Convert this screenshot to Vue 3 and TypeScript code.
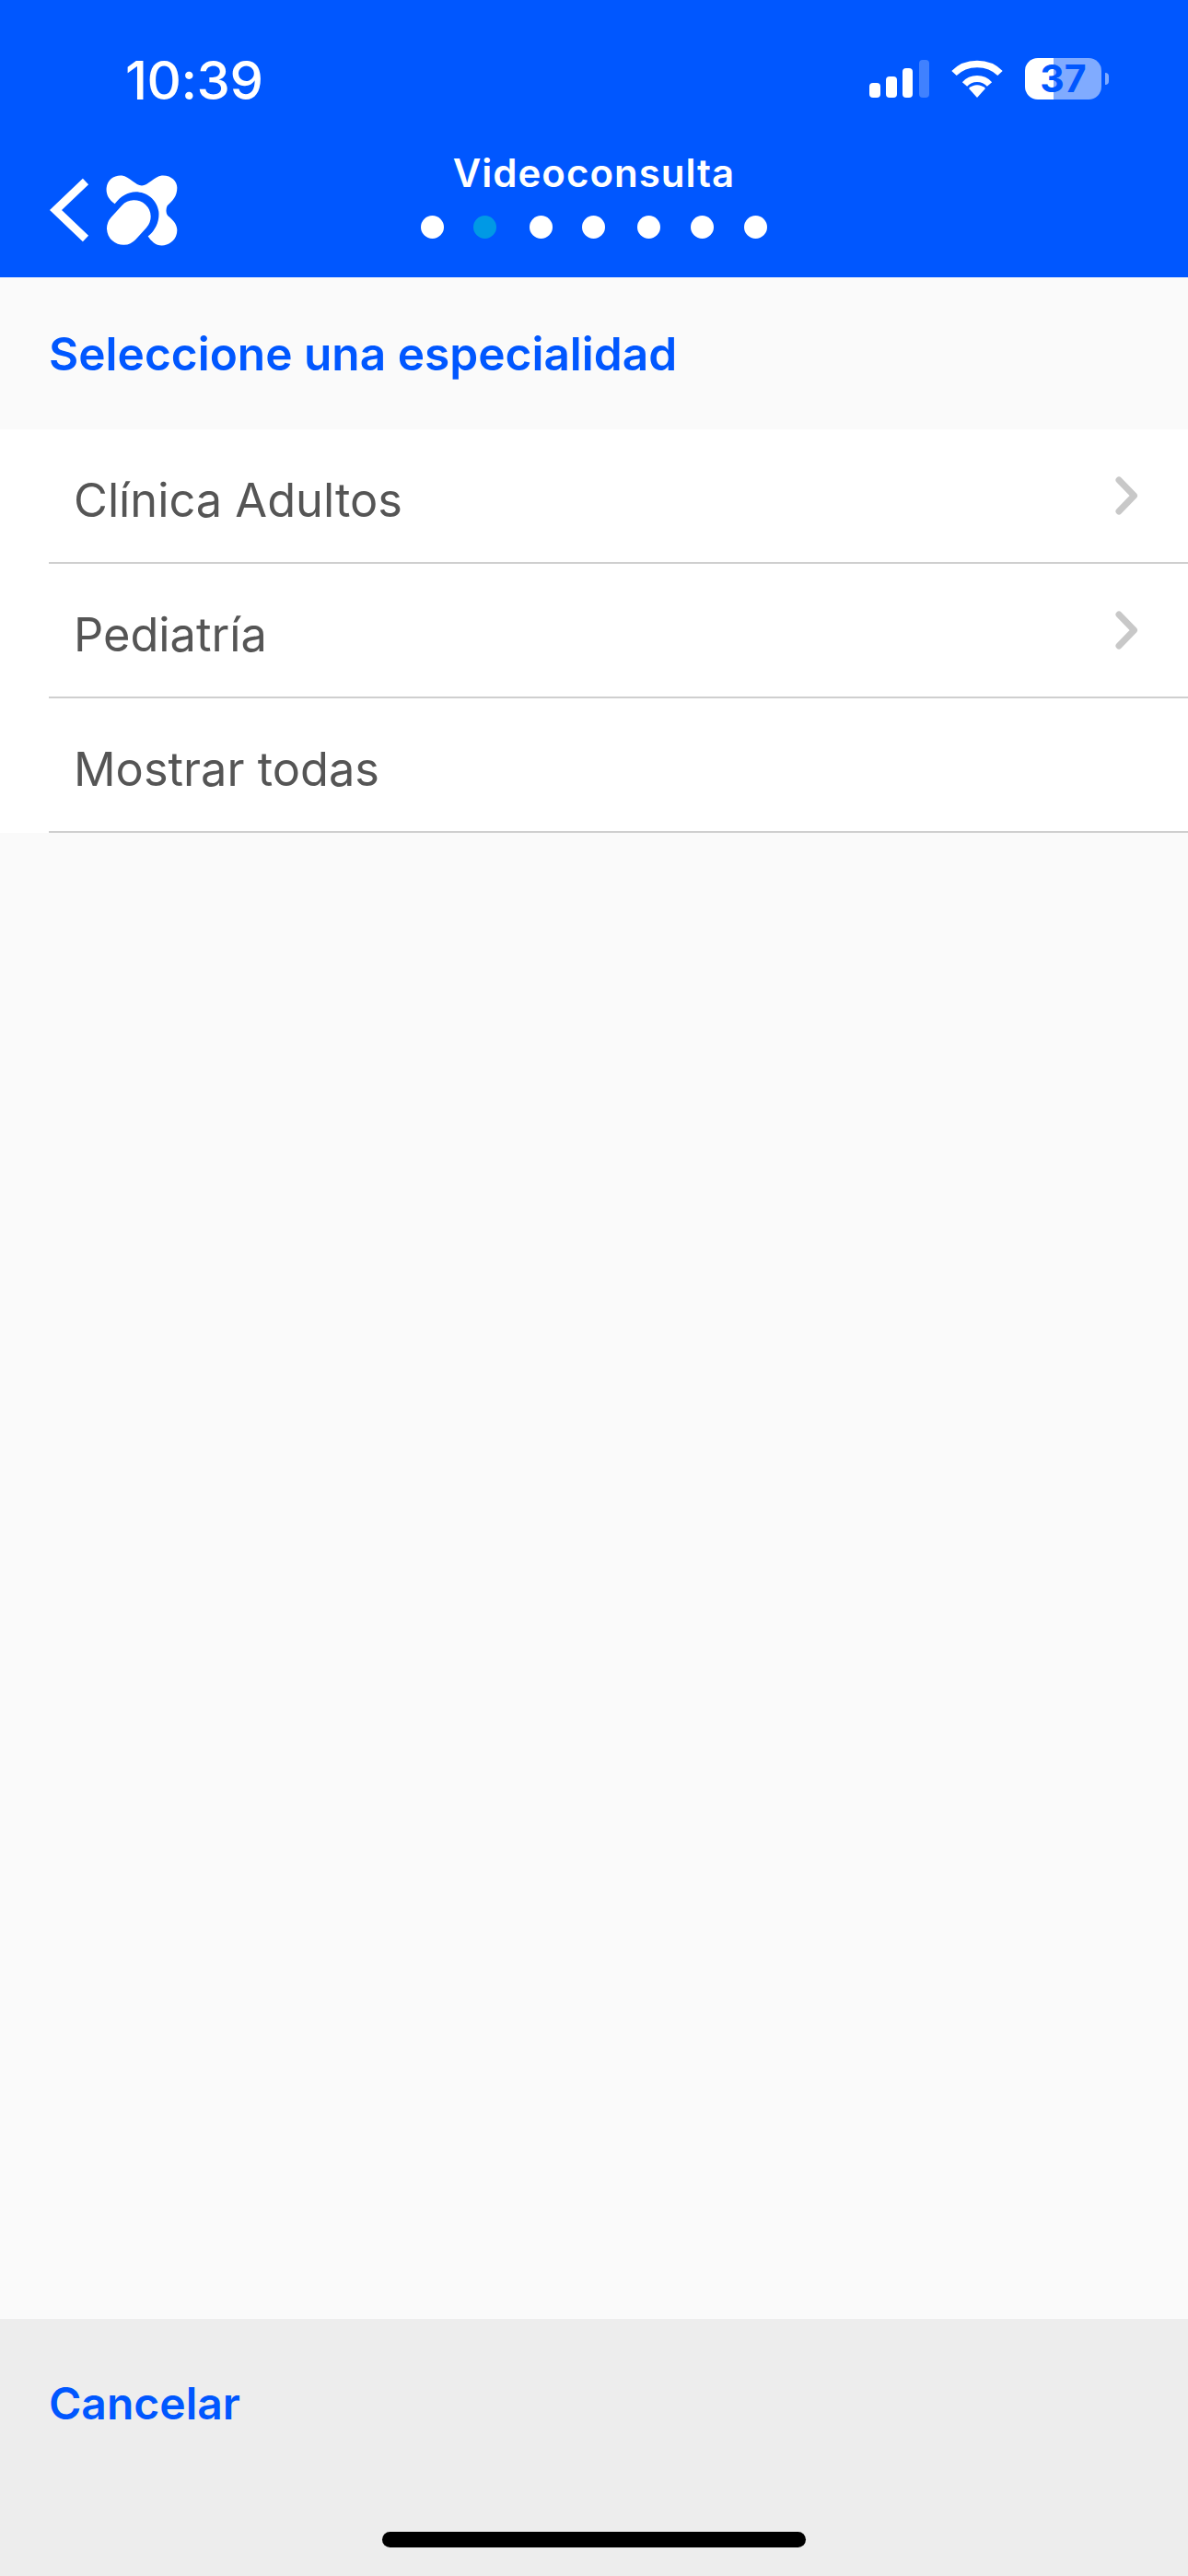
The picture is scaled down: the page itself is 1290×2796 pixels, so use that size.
<script setup lang="ts">
const dots: { active: boolean; gap: number }[] = [
  { active: false, gap: 32 },
  { active: true, gap: 36 },
  { active: false, gap: 32 },
  { active: false, gap: 35 },
  { active: false, gap: 33 },
  { active: false, gap: 33 },
  { active: false, gap: 0 },
]
const rows: { label: string; more: boolean }[] = [
  { label: 'Clínica Adultos', more: true },
  { label: 'Pediatría', more: true },
  { label: 'Mostrar todas', more: false },
]
</script>

<template>
  <div class="app">
    <header class="header">
      <div class="status">
        <span class="time">10:39</span>
        <div class="status-icons">
          <svg class="signal" viewBox="0 0 65 41" width="65" height="41">
            <rect x="0" y="25" width="12" height="16" rx="4" fill="#fff" />
            <rect x="18" y="18" width="12" height="23" rx="4" fill="#fff" />
            <rect x="36" y="9" width="11" height="32" rx="4" fill="#fff" />
            <rect x="54" y="0" width="11" height="41" rx="4" fill="#fff" opacity="0.25" />
          </svg>
          <svg class="wifi" viewBox="0 0 56 41" width="56" height="41">
            <path d="M28 41 L19 31 C24 26 32 26 37 31 Z" fill="#fff" />
            <path d="M14.500 26.500 C21.500 18.500 34.500 18.500 41.500 26.500" fill="none" stroke="#fff" stroke-width="7" />
            <path d="M3 14.500 C16 1 40 1 53 14.500" fill="none" stroke="#fff" stroke-width="7.500" />
          </svg>
          <div class="battery"><span>37</span></div>
        </div>
      </div>
      <div class="nav">
        <div class="brand">
          <svg class="back" viewBox="0 0 46 72" width="46" height="72">
            <path d="M41 5 L8.500 36 L41 67" fill="none" stroke="#fff" stroke-width="9" />
          </svg>
          <svg class="logo" viewBox="340 568 240 236" width="80" height="79">
            <path
              d="M372 664 C350 650 343 630 345 612 C348 585 370 570 395 572 C420 575 440 605 460 605 C480 605 500 575 525 572 C555 570 575 590 575 612 C575 640 560 655 543 670 C538 680 538 695 545 703 C560 715 575 730 575 750 C575 780 550 800 525 800 C505 800 490 785 480 770 C505 750 518 720 515 690 C510 650 475 625 440 625 C415 625 390 640 372 664 Z"
              fill="#fff"
            />
            <path d="M400 744 L435 706" fill="none" stroke="#fff" stroke-width="108" stroke-linecap="round" />
          </svg>
        </div>
        <div class="title-block">
          <div class="title">Videoconsulta</div>
          <div class="dots">
            <span
              v-for="(dot, i) in dots"
              :key="i"
              class="dot"
              :class="{ active: dot.active }"
              :style="{ marginRight: dot.gap + 'px' }"
            ></span>
          </div>
        </div>
      </div>
    </header>

    <main class="main">
      <h1 class="heading">Seleccione una especialidad</h1>
      <ul class="list">
        <li v-for="row in rows" :key="row.label" class="row">
          <span class="row-label">{{ row.label }}</span>
          <svg v-if="row.more" class="chevron" viewBox="0 0 26 42" width="26" height="42">
            <path d="M4 4 L20.500 21 L4 38" fill="none" stroke="#c8c8c8" stroke-width="7" stroke-linecap="round" stroke-linejoin="round" />
          </svg>
        </li>
      </ul>
    </main>

    <footer class="footer">
      <span class="cancel">Cancelar</span>
      <div class="home"></div>
    </footer>
  </div>
</template>

<style>
html,
body {
  margin: 0;
  background: #fafafa;
}
</style>

<style scoped>
.app {
  width: 1290px;
  height: 2796px;
  display: flex;
  flex-direction: column;
  font-family: Inter, "Liberation Sans", sans-serif;
  background: #fafafa;
}
.header {
  height: 301px;
  flex: none;
  background: #0057ff;
  color: #fff;
  box-sizing: border-box;
}
.status {
  height: 159px;
  box-sizing: border-box;
  padding: 52px 94px 0 136px;
  display: flex;
  justify-content: space-between;
  align-items: flex-start;
}
.time {
  font-size: 58px;
  font-weight: 500;
  line-height: 70px;
  letter-spacing: -0.5px;
}
.status-icons {
  display: flex;
  align-items: flex-start;
  margin-top: 13px;
}
.wifi {
  margin-left: 24px;
}
.battery {
  position: relative;
  width: 83px;
  height: 45px;
  margin-left: 24px;
  margin-top: -2px;
  border-radius: 14px;
  background: linear-gradient(to right, #fff 0, #fff 31px, rgba(255, 255, 255, 0.5) 31px, rgba(255, 255, 255, 0.5) 100%);
  display: flex;
  align-items: center;
  justify-content: center;
  color: #0057ff;
  font-size: 41px;
  font-weight: 700;
  line-height: 45px;
}
.battery::after {
  content: "";
  position: absolute;
  right: -8px;
  top: 16px;
  width: 4px;
  height: 13px;
  border-radius: 0 6px 6px 0;
  background: rgba(255, 255, 255, 0.5);
}
.nav {
  position: relative;
  height: 142px;
}
.brand {
  display: flex;
  align-items: flex-start;
  padding: 30px 0 0 52px;
  gap: 16px;
}
.back {
  margin-top: 3px;
}
.title-block {
  position: absolute;
  left: 0;
  right: 0;
  top: 0;
  display: flex;
  flex-direction: column;
  align-items: center;
}
.title {
  font-size: 42px;
  font-weight: 600;
  line-height: 50px;
  letter-spacing: 1px;
  margin-top: 4px;
}
.dots {
  display: flex;
  margin-top: 21px;
}
.dot {
  width: 25px;
  height: 25px;
  border-radius: 50%;
  background: #fff;
}
.dot.active {
  background: #0099e5;
}
.main {
  flex: 1;
  min-height: 0;
}
.heading {
  margin: 0;
  height: 165px;
  box-sizing: border-box;
  padding: 0 0 0 53px;
  display: flex;
  align-items: center;
  font-size: 49.600px;
  font-weight: 600;
  color: #0057ff;
}
.list {
  list-style: none;
  margin: 0;
  padding: 0;
  background: #fff;
}
.row {
  margin-left: 53px;
  height: 146px;
  box-sizing: border-box;
  border-bottom: 2px solid #cfcfcf;
  padding: 9px 53px 0 27px;
  display: flex;
  align-items: center;
  justify-content: space-between;
}
.row-label {
  font-size: 50.500px;
  font-weight: 400;
  color: #555;
}
.chevron {
  margin-top: -9px;
}
.footer {
  position: relative;
  flex: none;
  height: 279px;
  background: #ededed;
  box-sizing: border-box;
  padding: 63px 0 0 53px;
}
.cancel {
  font-size: 48px;
  font-weight: 600;
  line-height: 58px;
  color: #0057ff;
}
.home {
  position: absolute;
  left: 415px;
  top: 231px;
  width: 460px;
  height: 17px;
  border-radius: 9px;
  background: #000;
}
</style>
